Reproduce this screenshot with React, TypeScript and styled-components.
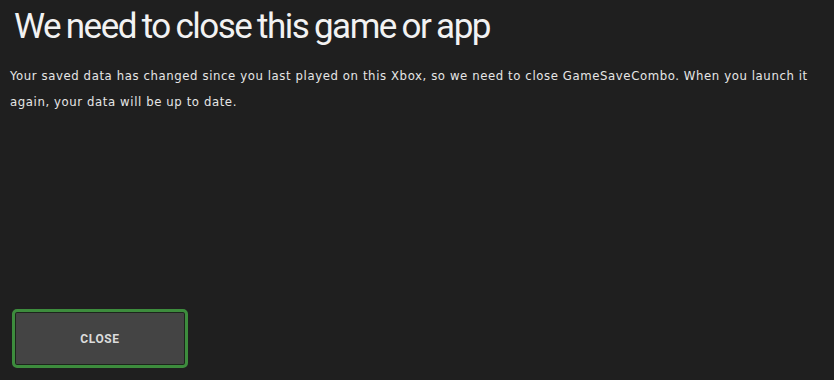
import React from "react";
import styled, { createGlobalStyle } from "styled-components";

const Global = createGlobalStyle`
  html, body { margin: 0; padding: 0; background: #1f1f1f; }
  #root { height: 380px; }
`;

const Page = styled.div`
  box-sizing: border-box;
  height: 380px;
  width: 834px;
  background: #1f1f1f;
  display: flex;
  flex-direction: column;
  padding: 4px 4px 12px 10px;
`;

const Title = styled.h1`
  margin: 0 0 0 4px;
  font-family: Roboto, "Noto Sans", sans-serif;
  font-weight: 400;
  font-size: 35px;
  line-height: 46px;
  color: #f2f2f2;
  letter-spacing: -1.5px;
  word-spacing: -1.5px;
`;

const Body = styled.p`
  margin: 13px 0 0 0;
  font-family: "DejaVu Sans Condensed", "Liberation Sans Narrow", sans-serif;
  font-size: 13px;
  line-height: 26px;
  letter-spacing: 0.6px;
  color: #e6e6e6;
  max-width: 815px;
`;

const CloseButton = styled.button`
  margin-top: auto;
  margin-left: 2px;
  box-sizing: border-box;
  width: 176px;
  height: 59px;
  border: 3px solid #3d8c3d;
  border-radius: 5px;
  background: #444444;
  box-shadow: inset 0 0 0 1px #1c261c;
  color: #dcdcdc;
  font-family: Roboto, "Noto Sans", sans-serif;
  font-weight: 700;
  font-size: 12px;
  letter-spacing: 0.6px;
  cursor: pointer;
  padding: 0;
`;

export default function App() {
  return (
    <>
      <Global />
      <Page>
        <Title>We need to close this game or app</Title>
        <Body>
          Your saved data has changed since you last played on this Xbox, so we need to close GameSaveCombo. When you launch it again, your data will be up to date.
        </Body>
        <CloseButton>CLOSE</CloseButton>
      </Page>
    </>
  );
}
